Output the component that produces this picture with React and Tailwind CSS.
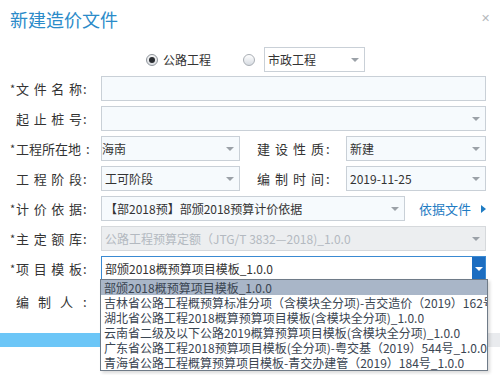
import React from 'react';

const FONT = "font-['Noto_Sans_CJK_SC',sans-serif]";

const Arrow = () => (
  <span className="w-0 h-0 border-l-[4px] border-r-[4px] border-t-[4px] border-l-transparent border-r-transparent border-t-[#9ba1a8] shrink-0" />
);

// left column label: star slot + spread chars + colon
const Label = ({ star, text, w = 66, colonGap = 1 }) => (
  <div className="flex items-center w-[91px] shrink-0 text-[13px] text-[#333] leading-none">
    <span className="w-[6px] text-[11px]">{star ? '*' : ''}</span>
    <span className="flex justify-between" style={{ width: w }}>
      {text.split('').map((c, i) => <span key={i}>{c}</span>)}
    </span>
    <span style={{ marginLeft: colonGap }}>:</span>
  </div>
);

const RightLabel = ({ text }) => (
  <div className="flex items-center w-[106px] shrink-0 pl-[17px] text-[13px] text-[#333] leading-none">
    <span className="flex justify-between w-[67px]">
      {text.split('').map((c, i) => <span key={i}>{c}</span>)}
    </span>
    <span className="ml-[2px]">:</span>
  </div>
);

const Field = ({ value, arrow, className = '', textClass = 'text-[#333]', disabled }) => (
  <div
    className={`flex items-center h-[25px] border pl-[3px] pr-[5px] text-[12px] ${
      disabled ? 'bg-[#eceef0] border-[#d6d9dc]' : 'bg-[#f6fafd] border-[#c9d0d7]'
    } ${className}`}
  >
    <span className={`flex-1 whitespace-nowrap overflow-hidden ${textClass}`}>{value}</span>
    {arrow && <Arrow />}
  </div>
);

const templates = [
  '部颁2018概预算项目模板_1.0.0',
  '吉林省公路工程概预算标准分项（含模块全分项)-吉交造价（2019）162号_1.0.0',
  '湖北省公路工程2018概算预算项目模板(含模块全分项)_1.0.0',
  '云南省二级及以下公路2019概算预算项目模板(含模块全分项)_1.0.0',
  '广东省公路工程2018预算项目模板(全分项)-粤交基（2019）544号_1.0.0',
  '青海省公路工程概算预算项目模板-青交办建管（2019）184号_1.0.0',
];

export default function App() {
  return (
    <div className={`relative w-[500px] h-[375px] bg-white overflow-hidden ${FONT}`}>
      {/* header */}
      <div className="flex items-start justify-between h-[47px] pl-[10px] pr-[10px] pt-[7px]">
        <h1 className="text-[18px] leading-[24px] text-[#2b8bc9] font-normal">新建造价文件</h1>
        <span className="text-[11px] leading-none text-[#b5b9bd] mt-[5px]">✕</span>
      </div>

      {/* type radios */}
      <div className="flex items-center h-[25px] pl-[146px] text-[12px] text-[#333]">
        <span className="flex items-center justify-center w-[12px] h-[12px] rounded-full border border-[#8e949b] bg-gradient-to-b from-[#f4f4f4] to-[#dcdfe3]">
          <span className="w-[6px] h-[6px] rounded-full bg-[#2a2d31]" />
        </span>
        <span className="ml-[5px]">公路工程</span>
        <span className="ml-[32px] w-[12px] h-[12px] rounded-full border border-[#a9aeb4] bg-gradient-to-b from-[#ffffff] to-[#d7dce2]" />
        <Field value="市政工程" arrow className="ml-[9px] w-[101px] !bg-white" />
      </div>

      {/* form */}
      <div className="flex flex-col gap-[5px] mt-[4px] pl-[10px] pr-[14px]">
        <div className="flex items-center">
          <Label star text="文件名称" />
          <Field value="" className="flex-1" />
        </div>
        <div className="flex items-center">
          <Label text="起止桩号" />
          <Field value="" arrow className="flex-1" />
        </div>
        <div className="flex items-center">
          <Label star text="工程所在地" w={62} colonGap={8} />
          <Field value="海南" arrow className="w-[139px] !pl-0" />
          <RightLabel text="建设性质" />
          <Field value="新建" arrow className="flex-1" />
        </div>
        <div className="flex items-center">
          <Label text="工程阶段" />
          <Field value="工可阶段" arrow className="w-[139px]" />
          <RightLabel text="编制时间" />
          <Field value="2019-11-25" arrow className="flex-1" />
        </div>
        <div className="flex items-center">
          <Label star text="计价依据" />
          <Field value="【部2018预】部颁2018预算计价依据" arrow className="w-[304px]" />
          <a className="flex items-center ml-[14px] text-[13px] text-[#1f7cc3] leading-none">
            依据文件
            <span className="ml-[10px] w-0 h-0 border-t-[4px] border-b-[4px] border-l-[5px] border-t-transparent border-b-transparent border-l-[#1f7cc3]" />
          </a>
        </div>
        <div className="flex items-center">
          <Label star text="主定额库" />
          <Field
            value="公路工程预算定额（JTG/T 3832—2018)_1.0.0"
            arrow
            disabled
            textClass="text-[#b3b9c0]"
            className="flex-1"
          />
        </div>
        <div className="flex items-center">
          <Label star text="项目模板" />
          <div className="flex-1 flex items-center h-[25px] border border-[#3a8ad2] bg-white pl-[3px] text-[12px] text-[#333]">
            <span className="flex-1 whitespace-nowrap">部颁2018概预算项目模板_1.0.0</span>
            <span className="flex items-center justify-center w-[13px] h-full bg-[#1c6dc1]">
              <span className="w-0 h-0 border-l-[4px] border-r-[4px] border-t-[4px] border-l-transparent border-r-transparent border-t-white" />
            </span>
          </div>
        </div>
        <div className="flex items-center h-[25px] mt-[3px]">
          <Label text="编制人" w={57} colonGap={10} />
        </div>
      </div>

      {/* footer band */}
      <div className="flex mt-[19px] h-[14px]">
        <div className="w-[320px] bg-[#6cc6f7]" />
        <div className="flex-1 bg-[#e9ebee]" />
      </div>

      {/* open dropdown list */}
      <div className="absolute left-[100px] top-[279px] w-[388px] h-[92px] border border-[#6f7b88] bg-white overflow-hidden shadow-[2px_2px_3px_rgba(0,0,0,0.15)]">
        {templates.map((t, i) => (
          <div
            key={t}
            className={`h-[15px] leading-[15px] pl-[3px] text-[12px] text-[#3a4552] whitespace-nowrap ${
              i === 0 ? 'bg-[#a9b6c8]' : ''
            }`}
          >
            {t}
          </div>
        ))}
      </div>
    </div>
  );
}
